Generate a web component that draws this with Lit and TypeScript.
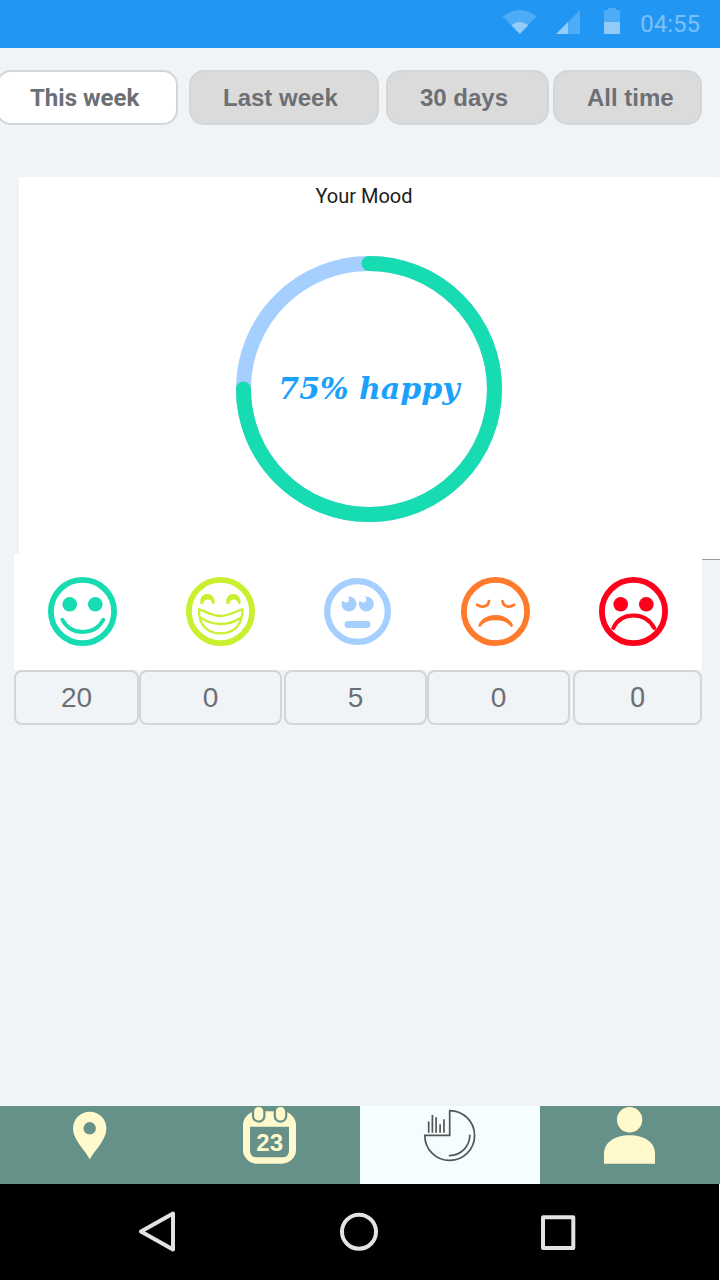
import { LitElement, html, svg, css } from "lit";
import { customElement, state } from "lit/decorators.js";

const PERIODS = ["This week", "Last week", "30 days", "All time"];

const roundEyes = svg`<circle cx="21.7" cy="27.3" r="7.3" fill="currentColor"/><circle cx="47.3" cy="27.3" r="7.3" fill="currentColor"/>`;
const archEye = svg`<path fill="currentColor" d="M14.2 25.8C14.2 19.5 17.3 17 21.4 17S28.7 19.8 28.7 25.8C28.6 27.6 26.5 27.5 26.1 26C25.2 23.4 24 22.6 21.8 22.6S18.4 23.8 17.2 26.2C16.4 27.7 14.2 27.5 14.2 25.8Z"/>`;
const ring = svg`<circle cx="34.5" cy="34.5" r="31.6" fill="none" stroke="currentColor" stroke-width="5.8"/>`;

const MOODS = [
  {
    name: "happy",
    count: 20,
    face: svg`${ring}${roundEyes}<path d="M14.3 42.7C19 51 26 55 34.7 55S51 51 55.3 42.7" fill="none" stroke="currentColor" stroke-width="3.8" stroke-linecap="round"/>`,
  },
  {
    name: "laughing",
    count: 0,
    face: svg`${ring}${archEye}<g transform="translate(26 0)">${archEye}</g><g fill="none" stroke="currentColor" stroke-width="2.3" stroke-linejoin="round"><path d="M13 32.4C20 34.5 27 39 34.6 39S49 34.5 56.5 32.4C56.5 48 48 56.3 34.6 56.3S12.6 48 13 32.4Z"/><path d="M13.8 40.2C20 45 27 47 34.7 47S49 45 55.6 40.2"/></g>`,
  },
  {
    name: "unsure",
    count: 5,
    face: svg`<circle cx="34.5" cy="34.5" r="30.3" fill="none" stroke="currentColor" stroke-width="6.3"/><g fill="currentColor"><circle cx="26" cy="27" r="7.5"/><circle cx="43.3" cy="27" r="7.5"/><rect x="21.5" y="44" width="26" height="7" rx="3.4"/></g><g fill="#fff"><circle cx="23" cy="22.6" r="3"/><path d="M17 23.5V18H23.5L22 20L20.5 24.3Z"/><circle cx="40.3" cy="22.6" r="3"/><path d="M34.3 23.5V18H40.8L39.3 20L37.8 24.3Z"/></g>`,
  },
  {
    name: "sad",
    count: 0,
    face: svg`${ring}<g fill="none" stroke="currentColor" stroke-width="2.8" stroke-linecap="round"><path d="M16.2 27.8C20 30.5 27 30.5 28 24.2"/><path d="M41.5 24.2C42.5 30.5 49.3 30.5 53 27.8"/></g><path fill="currentColor" d="M17.5 47.8C20.5 41.3 27 38 34.6 38S48.7 41.3 51.8 47.8C52.3 50 50.5 50.5 49.3 49.2C46 44.8 41 43.2 34.6 43.2S23 44.8 19.8 49.2C18.5 50.5 17 49.8 17.5 47.8Z"/>`,
  },
  {
    name: "upset",
    count: 0,
    face: svg`${ring}${roundEyes}<path d="M14.3 51C18 43 25.5 38.5 34.6 38.5S51 43 55.2 51" fill="none" stroke="currentColor" stroke-width="4" stroke-linecap="round"/>`,
  },
];

const TABS = [
  {
    name: "Places",
    icon: svg`<path fill="currentColor" fill-rule="evenodd" d="M29.7 53.3C25 43.5 13 34 13 22.4A16.7 16.7 0 0 1 46.4 22.4C46.4 34 35 43.5 29.7 53.3ZM29.7 16.1A6.2 6.2 0 1 0 29.7 28.5A6.2 6.2 0 1 0 29.7 16.1Z"/>`,
  },
  {
    name: "Calendar",
    icon: svg`<path fill="currentColor" fill-rule="evenodd" d="M17 5.3H42A14 14 0 0 1 56 19.3V43.7A14 14 0 0 1 42 57.7H17A14 14 0 0 1 3 43.7V19.3A14 14 0 0 1 17 5.3ZM10 20.7V45A6 6 0 0 0 16 51.3H43A6 6 0 0 0 49 45V20.7Z"/><g fill="currentColor" stroke="#669188" stroke-width="2.2"><rect x="13" y="-0.2" width="11.4" height="15.8" rx="5.6"/><rect x="34.8" y="-0.2" width="11.4" height="15.8" rx="5.6"/></g><text class="day" x="29.7" y="44.6" text-anchor="middle" fill="currentColor">23</text>`,
  },
  {
    name: "Statistics",
    icon: svg`<g fill="none" stroke="currentColor" stroke-width="1.7"><path d="M29.7 29.4V4.6A24.9 24.9 0 1 1 4.8 29.4Z"/><path stroke-linecap="round" d="M49.8 29.3A20.3 20.3 0 0 1 29.5 49.6"/><path d="M8.7 15.6V26.8M12.4 9V26.8M16.1 11.2V26.8M20.1 18.2V26.8M24 13.2V26.8"/></g>`,
  },
  {
    name: "Profile",
    icon: svg`<circle cx="29.6" cy="13.8" r="12.7" fill="currentColor"/><path fill="currentColor" d="M4 57.7V47.5C4 36.5 15 29.3 29.6 29.3S55 36.5 55 47.5V57.7Z"/>`,
  },
];

@customElement("app-root")
export class AppRoot extends LitElement {
  @state() private period = 0;
  @state() private tab = 2;

  static styles = css`
    :host {
      display: flex;
      flex-direction: column;
      min-height: 100vh;
      overflow-x: hidden;
      background: #f0f4f7;
      font-family: "Liberation Sans", Arial, sans-serif;
    }
    svg {
      display: block;
    }
    button {
      margin: 0;
      padding: 0;
      border: 0;
      background: none;
      font: inherit;
      color: inherit;
      cursor: pointer;
    }
    .status {
      display: flex;
      justify-content: flex-end;
      gap: 20px;
      height: 48px;
      padding: 8px 20px 0;
      box-sizing: border-box;
      background: #2296f3;
      color: #fff;
    }
    .clock {
      font: 24px/32px Roboto, sans-serif;
      opacity: 0.4;
    }
    main {
      flex: 1;
    }
    .periods {
      display: grid;
      grid-template-columns: 182fr 11fr 190fr 7fr 163fr 4fr 149fr;
      margin: 22px 18px 0 -4px;
    }
    .period {
      height: 55px;
      padding: 0 0 0 32px;
      border: 2px solid #d1d6da;
      border-radius: 15px;
      background: #dbdbdb;
      color: #6c7076;
      font-size: 24px;
      font-weight: 700;
      text-align: left;
      white-space: nowrap;
    }
    .period:nth-child(2) { grid-column: 3; }
    .period:nth-child(3) { grid-column: 5; }
    .period:nth-child(4) { grid-column: 7; }
    .period.active {
      background: #fff;
      font-family: Roboto, sans-serif;
    }
    .card {
      height: 382px;
      margin: 52px 0 0 19px;
      border-bottom: 1px solid #9a9a9a;
      border-radius: 2px 2px 0 0;
      background: #fff;
    }
    h1 {
      margin: 0;
      padding: 6px 11px 0 0;
      color: #1c1c1c;
      font: 400 20px/26px Roboto, sans-serif;
      text-align: center;
    }
    .gauge {
      display: grid;
      place-items: center;
      margin: 47px 1px 0 0;
    }
    .gauge > * {
      grid-area: 1 / 1;
    }
    .score {
      color: #1ba1fc;
      font: italic 700 30px/40px "DejaVu Serif", serif;
    }
    .moods,
    .counts {
      display: grid;
      margin: 0 18px 0 14px;
    }
    .moods {
      position: relative;
      grid-template-columns: repeat(5, 1fr);
      justify-items: center;
      margin-top: -6px;
      padding: 23px 0 24px;
      background: #fff;
    }
    .happy { color: #17dbb1; }
    .laughing { color: #c9f02f; }
    .unsure { color: #a5cfff; }
    .sad { color: #ff7b2b; }
    .upset { color: #fe0019; }
    .counts {
      grid-template-columns: 125fr 0fr 143fr 2fr 143fr 0fr 143fr 3fr 129fr;
    }
    .count {
      height: 55px;
      box-sizing: border-box;
      border: 2px solid #d1d6da;
      border-radius: 8px;
      color: #6c7076;
      font-size: 28px;
      line-height: 51px;
      text-align: center;
    }
    .count:nth-child(2) { grid-column: 3; }
    .count:nth-child(3) { grid-column: 5; }
    .count:nth-child(4) { grid-column: 7; }
    .count:nth-child(5) { grid-column: 9; font-family: Roboto, sans-serif; }
    .tabs {
      display: grid;
      grid-template-columns: repeat(4, 1fr);
    }
    .tab {
      display: flex;
      justify-content: center;
      align-items: flex-start;
      height: 78px;
      background: #669188;
      color: #fff9cc;
    }
    .tab.active {
      background: #f5feff;
      color: #555;
    }
    .day {
      font-size: 24px;
      font-weight: 700;
    }
    .system {
      display: grid;
      grid-template-columns: repeat(3, 1fr);
      place-items: center;
      height: 96px;
      padding: 0 61px 0 58px;
      border-right: 1px solid #fff;
      background: #000;
      color: #e4e2e2;
    }
  `;

  render() {
    return html`
      <header class="status">
        <svg width="34" height="26" viewBox="0 0 34 26" fill="#fff" aria-hidden="true">
          <path opacity=".2" d="M0.5 8.5Q17.5 -4.5 34.5 8.5L17.8 26Z"/>
          <path opacity=".4" d="M9.5 17.2Q17.8 10.8 26.3 17.2L17.8 26Z"/>
        </svg>
        <svg width="28" height="26" viewBox="0 0 28 26" fill="#fff" aria-hidden="true">
          <path opacity=".2" d="M0 26L24 2V26Z"/>
          <path opacity=".4" d="M0 26L12 14V26Z"/>
        </svg>
        <svg width="16" height="26" viewBox="0 0 16 26" fill="#fff" aria-hidden="true">
          <path opacity=".2" d="M4 0H12V2H14.5Q16 2 16 3.5V14H0V3.5Q0 2 1.5 2H4Z"/>
          <path opacity=".5" d="M0 14H16V24.5Q16 26 14.5 26H1.5Q0 26 0 24.5Z"/>
        </svg>
        <span class="clock">04:55</span>
      </header>
      <main>
        <div class="periods">
          ${PERIODS.map(
            (label, i) => html`<button
              class="period ${i === this.period ? "active" : ""}"
              aria-pressed=${i === this.period}
              @click=${() => (this.period = i)}
            >${label}</button>`
          )}
        </div>
        <section class="card">
          <h1>Your Mood</h1>
          <div class="gauge">
            <svg width="266" height="266" viewBox="0 0 266 266" fill="none" stroke-width="15" aria-hidden="true">
              <circle cx="133" cy="133" r="125.5" stroke="#a5cfff"/>
              <path d="M133 7.5A125.5 125.5 0 1 1 7.5 133" stroke="#17dbb1" stroke-linecap="round"/>
            </svg>
            <span class="score">75% happy</span>
          </div>
        </section>
        <div class="moods">
          ${MOODS.map(
            (m) => html`<svg class=${m.name} width="69" height="69" viewBox="0 0 69 69" role="img" aria-label=${m.name}>${m.face}</svg>`
          )}
        </div>
        <div class="counts">
          ${MOODS.map((m) => html`<output class="count" aria-label=${m.name}>${m.count}</output>`)}
        </div>
      </main>
      <nav class="tabs">
        ${TABS.map(
          (t, i) => html`<button
            class="tab ${i === this.tab ? "active" : ""}"
            aria-label=${t.name}
            @click=${() => (this.tab = i)}
          ><svg width="60" height="60" viewBox="0 0 60 60" aria-hidden="true">${t.icon}</svg></button>`
        )}
      </nav>
      <div class="system">
        <button aria-label="Back">
          <svg width="42" height="42" viewBox="0 0 42 42" fill="none" stroke="currentColor" stroke-width="4" stroke-linejoin="round">
            <path d="M4 20.5L36 2.5V38.5Z"/>
          </svg>
        </button>
        <button aria-label="Home">
          <svg width="42" height="42" viewBox="0 0 42 42" fill="none" stroke="currentColor" stroke-width="4">
            <circle cx="22" cy="20.7" r="17"/>
          </svg>
        </button>
        <button aria-label="Overview">
          <svg width="42" height="42" viewBox="0 0 42 42" fill="none" stroke="currentColor" stroke-width="4" stroke-linejoin="round">
            <rect x="6" y="6.3" width="30.3" height="30.7"/>
          </svg>
        </button>
      </div>
    `;
  }
}
